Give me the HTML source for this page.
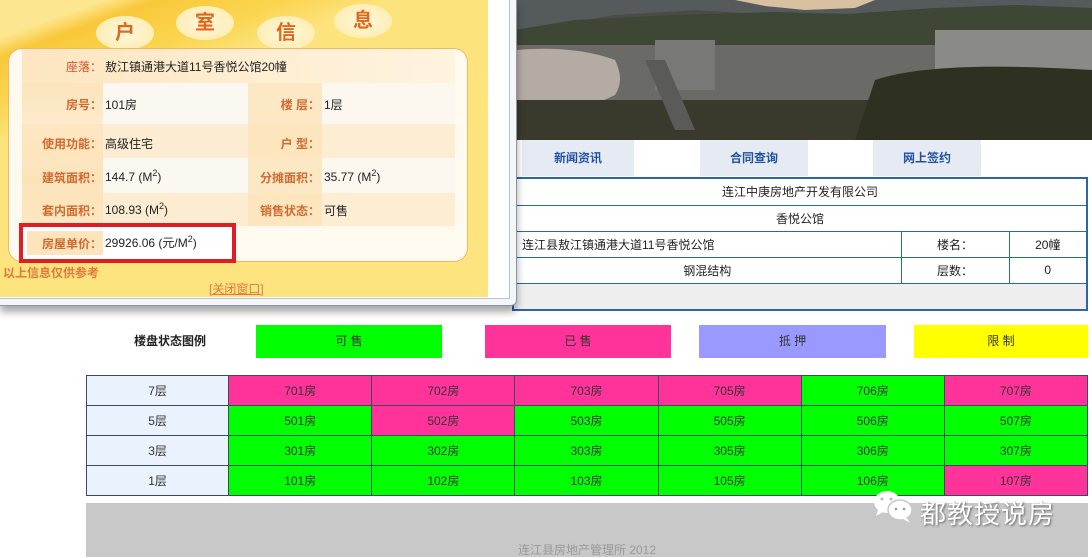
<!DOCTYPE html>
<html><head><meta charset="utf-8"><style>
*{margin:0;padding:0;box-sizing:border-box}
body{width:1092px;height:557px;overflow:hidden;background:#fff;position:relative;font-family:"Liberation Sans","Noto Sans CJK SC",sans-serif;font-size:12px;color:#222}
.a{position:absolute}
.tab{top:140px;height:36px;background:#e6ebf3;color:#2050a0;font-weight:bold;text-align:center;line-height:36px;font-size:12px}
.it{left:512px;top:177px;width:576px;border:2px solid #2a66a8;border-collapse:collapse;font-size:12px}
.it td{border:1px solid #2a66a8;text-align:center;height:26px}
.leg{top:325px;height:33px;text-align:center;line-height:33px;color:#333}
.g{border-collapse:collapse;left:86px;top:375px;width:1002px;font-size:12px}
.g td{border:1px solid #3a4a60;height:30px;text-align:center;width:143px;color:#333}
.g td.f{background:#eaf2fd;width:142px}
.p{background:#ff3399}.n{background:#00ff00}
.pop{left:0;top:0;width:517px;height:306px;background:#f4f6f8;border-right:1px solid #8a96a8;border-bottom:1px solid #8a96a8;box-shadow:0 6px 8px rgba(0,0,0,.35);border-radius:0 0 6px 0}
.pin{left:0;top:0;width:510px;height:299px;background:#fff;border-right:1px solid #b8c4d4;border-bottom:1px solid #b8c4d4}
.yel{left:0;top:0;width:488px;height:297px;background:linear-gradient(160deg,#fde690 0%,#fde690 8%,#f9c83a 12%,#fbd550 22%,#fde37c 30%,#fde47f 100%)}
.circ{width:58px;height:34px;border-radius:50%;background:radial-gradient(#fff8dc,#fde9a6);color:#e0681c;font-size:20px;font-weight:bold;text-align:center;line-height:34px}
.box{left:8px;top:48px;width:460px;height:214px;background:#fffaf0;border:1px solid #f0b860;border-radius:14px}
.lab{color:#d06a30;font-weight:bold;text-align:right;font-size:12px;position:absolute}
.val{position:absolute;font-size:12px;color:#222}
sup{font-size:9px}
</style></head><body>
<svg class="a" style="left:515px;top:0" width="577" height="140" viewBox="0 0 577 140">
<rect width="577" height="140" fill="#4a4c46"/>
<path d="M0 0H577V20L520 25 440 30 340 25 260 15 180 10 100 15 40 25 0 30Z" fill="#555a5c"/>
<path d="M220 0H360L340 8 290 10 250 6Z" fill="#d8c0a0"/>
<path d="M0 30L60 20 160 15 260 12 330 14 420 8 500 5 577 8V60L0 60Z" fill="#3e4636"/>
<path d="M0 45H577V120H0Z" fill="#6a6a66"/>
<path d="M420 30H577V100H420Z" fill="#8a8a86"/>
<path d="M140 40H200V90H140Z" fill="#787876"/>
<path d="M0 50Q60 45 100 60 110 80 100 95 60 115 0 125Z" fill="#b4aca4"/>
<path d="M0 100H577V140H0Z" fill="#3a3a2c"/>
<path d="M130 60L160 130 180 130 150 60Z" fill="#5a5a58"/>
<path d="M360 80Q420 60 577 70V140H340Z" fill="#2e3022"/>
</svg>
<div class="a tab" style="left:522px;width:112px">新闻资讯</div>
<div class="a tab" style="left:700px;width:108px">合同查询</div>
<div class="a tab" style="left:873px;width:108px">网上签约</div>
<table class="a it">
<tr><td colspan="3" style="height:27px">连江中庚房地产开发有限公司</td></tr>
<tr><td colspan="3">香悦公馆</td></tr>
<tr><td style="text-align:left;padding-left:8px">连江县敖江镇通港大道11号香悦公馆</td><td style="width:108px">楼名：</td><td style="width:78px">20幢</td></tr>
<tr><td>钢混结构</td><td>层数：</td><td>0</td></tr>
<tr><td colspan="3" style="background:#eeeeee;height:27px"></td></tr>
</table>
<div class="a leg" style="left:100px;width:140px;font-weight:bold;color:#222">楼盘状态图例</div>
<div class="a leg" style="left:256px;width:186px;background:#00ff00">可 售</div>
<div class="a leg" style="left:485px;width:186px;background:#ff3399">已 售</div>
<div class="a leg" style="left:699px;width:187px;background:#9999ff">抵 押</div>
<div class="a leg" style="left:914px;width:174px;background:#ffff00">限 制</div>
<table class="a g">
<tr><td class="f">7层</td><td class="p">701房</td><td class="p">702房</td><td class="p">703房</td><td class="p">705房</td><td class="n">706房</td><td class="p">707房</td></tr>
<tr><td class="f">5层</td><td class="n">501房</td><td class="p">502房</td><td class="n">503房</td><td class="n">505房</td><td class="n">506房</td><td class="n">507房</td></tr>
<tr><td class="f">3层</td><td class="n">301房</td><td class="n">302房</td><td class="n">303房</td><td class="n">305房</td><td class="n">306房</td><td class="n">307房</td></tr>
<tr><td class="f">1层</td><td class="n">101房</td><td class="n">102房</td><td class="n">103房</td><td class="n">105房</td><td class="n">106房</td><td class="p">107房</td></tr>
</table>
<div class="a" style="left:86px;top:503px;width:1002px;height:54px;background:#c8c8c8"></div>
<div class="a" style="left:86px;top:541px;width:1002px;text-align:center;color:#999;font-size:12px">连江县房地产管理所 2012</div>
<svg class="a" style="left:872px;top:489px" width="44" height="36" viewBox="0 0 44 36">
<ellipse cx="15" cy="13" rx="13" ry="11" fill="#fff"/><path d="M6 21 L4 27 L11 23Z" fill="#fff"/>
<ellipse cx="28" cy="21" rx="12" ry="10" fill="#fff" stroke="#c8c8c8" stroke-width="1.5"/><path d="M35 29 L38 34 L31 30Z" fill="#fff"/>
<circle cx="10" cy="10" r="1.5" fill="#bbb"/><circle cx="19" cy="10" r="1.5" fill="#bbb"/>
<circle cx="24" cy="20" r="1.3" fill="#999"/><circle cx="32" cy="20" r="1.3" fill="#999"/>
</svg>
<div class="a" style="left:920px;top:494px;color:#fff;font-size:26px;text-shadow:1px 1px 2px #666;letter-spacing:1px">都教授说房</div>

<div class="a pop"></div>
<div class="a pin"></div>
<div class="a yel"></div>
<div class="a circ" style="left:96px;top:16px">户</div>
<div class="a circ" style="left:176px;top:6px">室</div>
<div class="a circ" style="left:257px;top:16px">信</div>
<div class="a circ" style="left:334px;top:4px">息</div>
<div class="a box"></div>
<div class="a" style="left:22px;top:49px;width:433px;height:34px;background:linear-gradient(90deg,#fde6c0,#fff4e0)"></div>
<div class="a" style="left:22px;top:83px;width:81px;height:143px;background:linear-gradient(180deg,#fce4bc,#fdeccf,#fce2b8,#fdeccf)"></div>
<div class="a" style="left:103px;top:83px;width:145px;height:143px;background:#fbf8f1"></div>
<div class="a" style="left:248px;top:83px;width:74px;height:143px;background:#fde8c6"></div>
<div class="a" style="left:322px;top:83px;width:133px;height:143px;background:#fcf8f0"></div>
<div class="a" style="left:22px;top:124px;width:433px;height:34px;background:rgba(253,225,180,.5)"></div>
<div class="a" style="left:22px;top:193px;width:433px;height:33px;background:rgba(253,225,180,.5)"></div>
<div class="a" style="left:19px;top:223px;width:217px;height:40px;border:4px solid #e01c24;background:#fff"></div>
<div class="a" style="left:27px;top:231px;width:76px;height:24px;background:#fde4bc"></div>
<div class="lab" style="left:22px;width:80px;top:58px;font-weight:normal;color:#d8502a">座落：</div>
<div class="val" style="left:105px;top:58px">敖江镇通港大道11号香悦公馆20幢</div>
<div class="lab" style="left:22px;width:80px;top:96px">房号：</div><div class="val" style="left:105px;top:96px">101房</div>
<div class="lab" style="left:240px;width:80px;top:96px">楼 层：</div><div class="val" style="left:324px;top:96px">1层</div>
<div class="lab" style="left:22px;width:80px;top:135px">使用功能：</div><div class="val" style="left:105px;top:135px">高级住宅</div>
<div class="lab" style="left:240px;width:80px;top:135px">户 型：</div>
<div class="lab" style="left:22px;width:80px;top:169px">建筑面积：</div><div class="val" style="left:105px;top:168px">144.7 (M<sup>2</sup>)</div>
<div class="lab" style="left:240px;width:80px;top:169px">分摊面积：</div><div class="val" style="left:324px;top:168px">35.77 (M<sup>2</sup>)</div>
<div class="lab" style="left:22px;width:80px;top:202px">套内面积：</div><div class="val" style="left:105px;top:201px">108.93 (M<sup>2</sup>)</div>
<div class="lab" style="left:240px;width:80px;top:202px">销售状态：</div><div class="val" style="left:324px;top:202px">可售</div>
<div class="lab" style="left:22px;width:80px;top:235px">房屋单价：</div><div class="val" style="left:105px;top:234px">29926.06 (元/M<sup>2</sup>)</div>
<div class="a" style="left:3px;top:264px;color:#e07840;font-weight:bold;font-size:12px">以上信息仅供参考</div>
<div class="a" style="left:209px;top:280px;color:#e07840;font-size:12px;text-decoration:underline">[关闭窗口]</div>
</body></html>
